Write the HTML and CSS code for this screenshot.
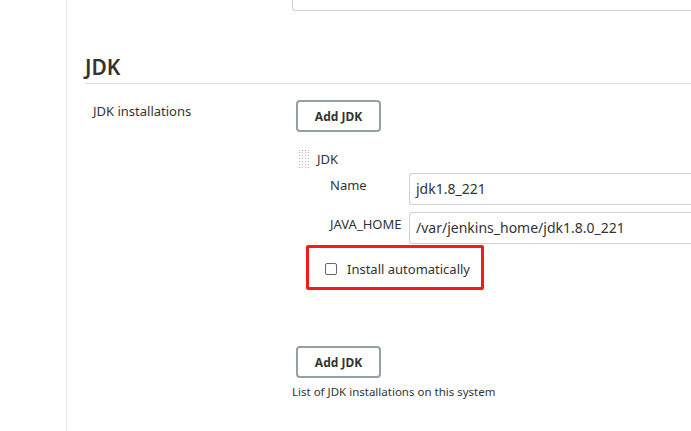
FILE: index.html
```html
<!DOCTYPE html>
<html>
<head>
<meta charset="utf-8">
<link rel="stylesheet" href="styles.css">
</head>
<body>
<div class="page">
  <div class="prev-field"><div class="prev-input"></div></div>

  <h2 class="section-title">JDK</h2>

  <div class="setting">
    <div class="setting-label">JDK installations</div>
    <div class="setting-body">
      <button class="btn">Add JDK</button>

      <div class="repeated">
        <div class="repeated-head">
          <span class="handle"></span>
          <span class="repeated-title">JDK</span>
        </div>
        <div class="field">
          <span class="field-label">Name</span>
          <div class="field-input">jdk1.8_221</div>
        </div>
        <div class="field">
          <span class="field-label">JAVA_HOME</span>
          <div class="field-input">/var/jenkins_home/jdk1.8.0_221</div>
        </div>
        <div class="check-row">
          <span class="checkbox"></span>
          <span class="check-label">Install automatically</span>
          <span class="highlight"></span>
        </div>
      </div>

      <button class="btn btn-bottom">Add JDK</button>
      <div class="help">List of JDK installations on this system</div>
    </div>
  </div>
</div>
</body>
</html>
```

FILE: styles.css
```css
html, body {
  margin: 0;
  padding: 0;
  background: #fff;
  overflow: hidden;
}
body {
  font-family: "Noto Sans", "Open Sans", sans-serif;
  color: #333;
  width: 691px;
  height: 431px;
}
.page {
  margin-left: 66px;
  border-left: 1px solid #e8ecef;
  height: 431px;
  padding-left: 18px;
  box-sizing: border-box;
}
.prev-field {
  padding-left: 207px;
  height: 12px;
}
.prev-input {
  height: 10px;
  border: 1px solid #cfd3d6;
  border-top: none;
  border-radius: 0 0 0 3px;
  border-right: none;
}
.section-title {
  margin: 40px 0 0 0;
  font-size: 21px;
  font-weight: 600;
  line-height: 30px;
  height: 31px;
  border-bottom: 1px solid #dcdfe1;
  color: #333;
}
.setting {
  display: grid;
  grid-template-columns: 207px 1fr;
  padding-top: 16px;
}
.setting-label {
  padding-left: 8px;
  font-size: 13px;
  line-height: 18px;
  padding-top: 2px;
}
.setting-body {
  display: flex;
  flex-direction: column;
  align-items: flex-start;
}
.btn {
  margin-left: 4px;
  width: 85px;
  height: 32px;
  background: #fff;
  border: 2px solid #959fa6;
  border-radius: 4px;
  font-family: inherit;
  font-size: 12px;
  font-weight: 700;
  color: #333;
  padding: 0;
}
.repeated {
  margin-top: 17px;
  margin-left: 7px;
  width: 400px;
}
.repeated-head {
  display: flex;
  align-items: flex-start;
  height: 22px;
}
.handle {
  width: 11px;
  height: 20px;
  margin-top: 1px;
  background-image: repeating-linear-gradient(90deg, transparent 0 1.5px, #fff 1.5px 3px),
                    repeating-linear-gradient(0deg, #fff 0 1.5px, #b3b3b3 1.5px 3px);
  margin-right: 7px;
}
.repeated-title {
  font-size: 13px;
  line-height: 20px;
}
.field {
  display: flex;
  align-items: flex-start;
  margin-top: 2px;
  margin-bottom: 7px;
}
.field-label {
  width: 110px;
  padding-left: 31px;
  box-sizing: border-box;
  font-size: 13px;
  line-height: 18px;
  padding-top: 3px;
  flex: none;
}
.field-input {
  width: 300px;
  height: 32px;
  border: 1px solid #cdd1d4;
  border-right: none;
  border-radius: 3px 0 0 3px;
  box-sizing: border-box;
  padding-left: 6px;
  font-size: 14px;
  line-height: 30px;
  flex: none;
}
.check-row {
  position: relative;
  display: flex;
  align-items: center;
  margin-top: 14px;
  padding-left: 26px;
  height: 22px;
}
.checkbox {
  width: 10px;
  height: 10px;
  border: 1.5px solid #666;
  border-radius: 2px;
  margin-right: 10px;
}
.check-label {
  font-size: 13px;
}
.highlight {
  position: absolute;
  left: 7px;
  top: -13px;
  width: 172px;
  height: 39px;
  border: 3px solid #f51c14;
  border-radius: 2px;
}
.btn-bottom {
  margin-top: 66px;
}
.help {
  margin-top: 6px;
  font-size: 11.5px;
  line-height: 16px;
}
```
